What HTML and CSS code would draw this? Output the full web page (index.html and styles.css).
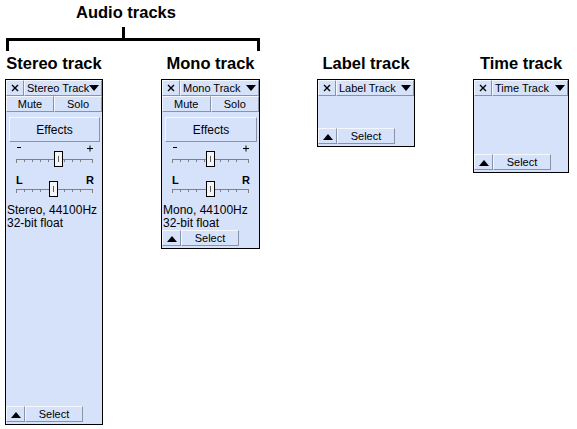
FILE: index.html
```html
<!DOCTYPE html>
<html>
<head>
<meta charset="utf-8">
<link rel="stylesheet" href="styles.css">
</head>
<body>
<div class="page">
  <div class="group-title">Audio tracks</div>
  <div class="stem"></div>
  <div class="bracket"></div>
  <div class="tracks">
    <div class="col">
      <div class="col-title">Stereo track</div>
      <div class="panel h-stereo">
        <div class="row">
          <div class="btn close"><svg width="8" height="8" viewBox="0 0 8 8"><path d="M1 1L7 7M7 1L1 7" stroke="#000" stroke-width="1.4"/></svg></div>
          <div class="btn name tight"><span>Stereo Track</span><i class="down"></i></div>
        </div>
        <div class="row">
          <div class="btn half">Mute</div>
          <div class="btn half">Solo</div>
        </div>
        <div class="btn effects">Effects</div>
        <svg class="slider" width="96" height="29" viewBox="0 0 96 29">
          <path d="M11 5.5H15" stroke="#000"/>
          <path d="M81 6.5H87M84 3.5V9.5" stroke="#000"/>
          <path d="M10 17.5H87" stroke="#808080"/>
          <path d="M10.5 17V21M18.5 18V20M26.5 18V20M34.5 18V20M42.5 18V20M58.5 18V20M66.5 18V20M74.5 18V20M86.5 17V21" stroke="#808080"/>
          <rect x="48.5" y="9.5" width="8" height="15" fill="#f4f4f4" stroke="#000"/>
          <path d="M52.5 14V20" stroke="#606060"/>
        </svg>
        <svg class="slider" width="96" height="29" viewBox="0 0 96 29">
          <text x="10" y="13" class="lr">L</text>
          <text x="80" y="13" class="lr">R</text>
          <path d="M10 18.5H87" stroke="#808080"/>
          <path d="M10.5 18V22M18.5 19V21M26.5 19V21M34.5 19V21M58.5 19V21M66.5 19V21M74.5 19V21M86.5 18V22" stroke="#808080"/>
          <rect x="43.5" y="10.5" width="8" height="15" fill="#f4f4f4" stroke="#000"/>
          <path d="M47.5 15V21" stroke="#606060"/>
        </svg>
        <div class="info">Stereo, 44100Hz<br>32-bit float</div>
        <div class="row bottom">
          <div class="btn up"><i class="uptri"></i></div>
          <div class="btn select">Select</div>
        </div>
      </div>
    </div>
    <div class="col">
      <div class="col-title">Mono track</div>
      <div class="panel h-mono">
        <div class="row">
          <div class="btn close"><svg width="8" height="8" viewBox="0 0 8 8"><path d="M1 1L7 7M7 1L1 7" stroke="#000" stroke-width="1.4"/></svg></div>
          <div class="btn name"><span>Mono Track</span><i class="down"></i></div>
        </div>
        <div class="row">
          <div class="btn half">Mute</div>
          <div class="btn half">Solo</div>
        </div>
        <div class="btn effects">Effects</div>
        <svg class="slider" width="96" height="29" viewBox="0 0 96 29">
          <path d="M11 5.5H15" stroke="#000"/>
          <path d="M81 6.5H87M84 3.5V9.5" stroke="#000"/>
          <path d="M10 17.5H87" stroke="#808080"/>
          <path d="M10.5 17V21M18.5 18V20M26.5 18V20M34.5 18V20M42.5 18V20M58.5 18V20M66.5 18V20M74.5 18V20M86.5 17V21" stroke="#808080"/>
          <rect x="44.5" y="9.5" width="8" height="15" fill="#f4f4f4" stroke="#000"/>
          <path d="M48.5 14V20" stroke="#606060"/>
        </svg>
        <svg class="slider" width="96" height="29" viewBox="0 0 96 29">
          <text x="10" y="13" class="lr">L</text>
          <text x="80" y="13" class="lr">R</text>
          <path d="M10 18.5H87" stroke="#808080"/>
          <path d="M10.5 18V22M18.5 19V21M26.5 19V21M34.5 19V21M58.5 19V21M66.5 19V21M74.5 19V21M86.5 18V22" stroke="#808080"/>
          <rect x="44.5" y="10.5" width="8" height="15" fill="#f4f4f4" stroke="#000"/>
          <path d="M48.5 15V21" stroke="#606060"/>
        </svg>
        <div class="info">Mono, 44100Hz<br>32-bit float</div>
        <div class="row bottom">
          <div class="btn up"><i class="uptri"></i></div>
          <div class="btn select">Select</div>
        </div>
      </div>
    </div>
    <div class="col">
      <div class="col-title">Label track</div>
      <div class="panel h-label">
        <div class="row">
          <div class="btn close"><svg width="8" height="8" viewBox="0 0 8 8"><path d="M1 1L7 7M7 1L1 7" stroke="#000" stroke-width="1.4"/></svg></div>
          <div class="btn name"><span>Label Track</span><i class="down"></i></div>
        </div>
        <div class="row bottom">
          <div class="btn up"><i class="uptri"></i></div>
          <div class="btn select">Select</div>
        </div>
      </div>
    </div>
    <div class="col">
      <div class="col-title">Time track</div>
      <div class="panel h-time">
        <div class="row">
          <div class="btn close"><svg width="8" height="8" viewBox="0 0 8 8"><path d="M1 1L7 7M7 1L1 7" stroke="#000" stroke-width="1.4"/></svg></div>
          <div class="btn name"><span>Time Track</span><i class="down"></i></div>
        </div>
        <div class="row bottom">
          <div class="btn up"><i class="uptri"></i></div>
          <div class="btn select">Select</div>
        </div>
      </div>
    </div>
  </div>
</div>
</body>
</html>
```
FILE: styles.css
```css
* { box-sizing: border-box; }
html, body { margin: 0; padding: 0; background: #fff; }
body { font-family: "Liberation Sans", Arial, sans-serif; color: #000; }
.page { padding-top: 2px; }
.group-title {
  font-weight: bold; font-size: 16.5px; line-height: 20px;
  margin-left: 76px;
}
.stem { width: 3px; height: 11px; margin: 5px 0 0 122px; background: #000; }
.bracket {
  width: 254px; height: 13px; margin-left: 6px;
  border: 3px solid #000; border-bottom: 0;
}
.tracks {
  display: grid;
  grid-template-columns: repeat(4, 156px);
  padding-left: 5px;
  align-items: start;
}
.col {
  justify-self: start;
  display: flex; flex-direction: column; align-items: center;
}
.col-title {
  font-weight: bold; font-size: 16.5px; line-height: 20px;
  margin-top: 2px; margin-bottom: 6px;
}
.panel {
  width: 98px;
  border: 1px solid #000;
  background: #d6e2f9;
  display: flex; flex-direction: column;
  align-self: stretch;
}
.h-stereo { height: 346px; }
.h-mono { height: 170px; width: 99px; }
.h-label { height: 68px; }
.h-time { height: 94px; width: 96px; }
.row { display: flex; }
.btn {
  background: #d6e2f9;
  border: 1px solid;
  border-color: #f4f7fd #8a93a6 #8a93a6 #f4f7fd;
  font-size: 11px;
  display: flex; align-items: center; justify-content: center;
  height: 16px;
  white-space: nowrap;
  overflow: hidden;
}
.close { width: 18px; flex: none; }
.name { flex: 1; justify-content: space-between; padding: 0 2px 0 2px; }
.down {
  width: 0; height: 0;
  border-left: 5px solid transparent; border-right: 5px solid transparent;
  border-top: 6px solid #000;
}
.half { flex: 1; font-size: 11px; }
.effects {
  height: 25px; margin: 5px 2px 0 3px; font-size: 12px;
}
.slider { display: block; }
.lr { font-size: 11px; font-weight: bold; font-family: "Liberation Sans", Arial, sans-serif; }
.info {
  font-size: 12px; line-height: 13px; padding-left: 1px;
  margin-top: 4px;
}
.bottom { margin-top: auto; margin-bottom: 2px; }
.up { width: 19px; flex: none; align-items: flex-end; padding-bottom: 3px; }
.uptri {
  width: 0; height: 0;
  border-left: 5px solid transparent; border-right: 5px solid transparent;
  border-bottom: 6px solid #000;
}
.select { width: 58px; flex: none; }
```
